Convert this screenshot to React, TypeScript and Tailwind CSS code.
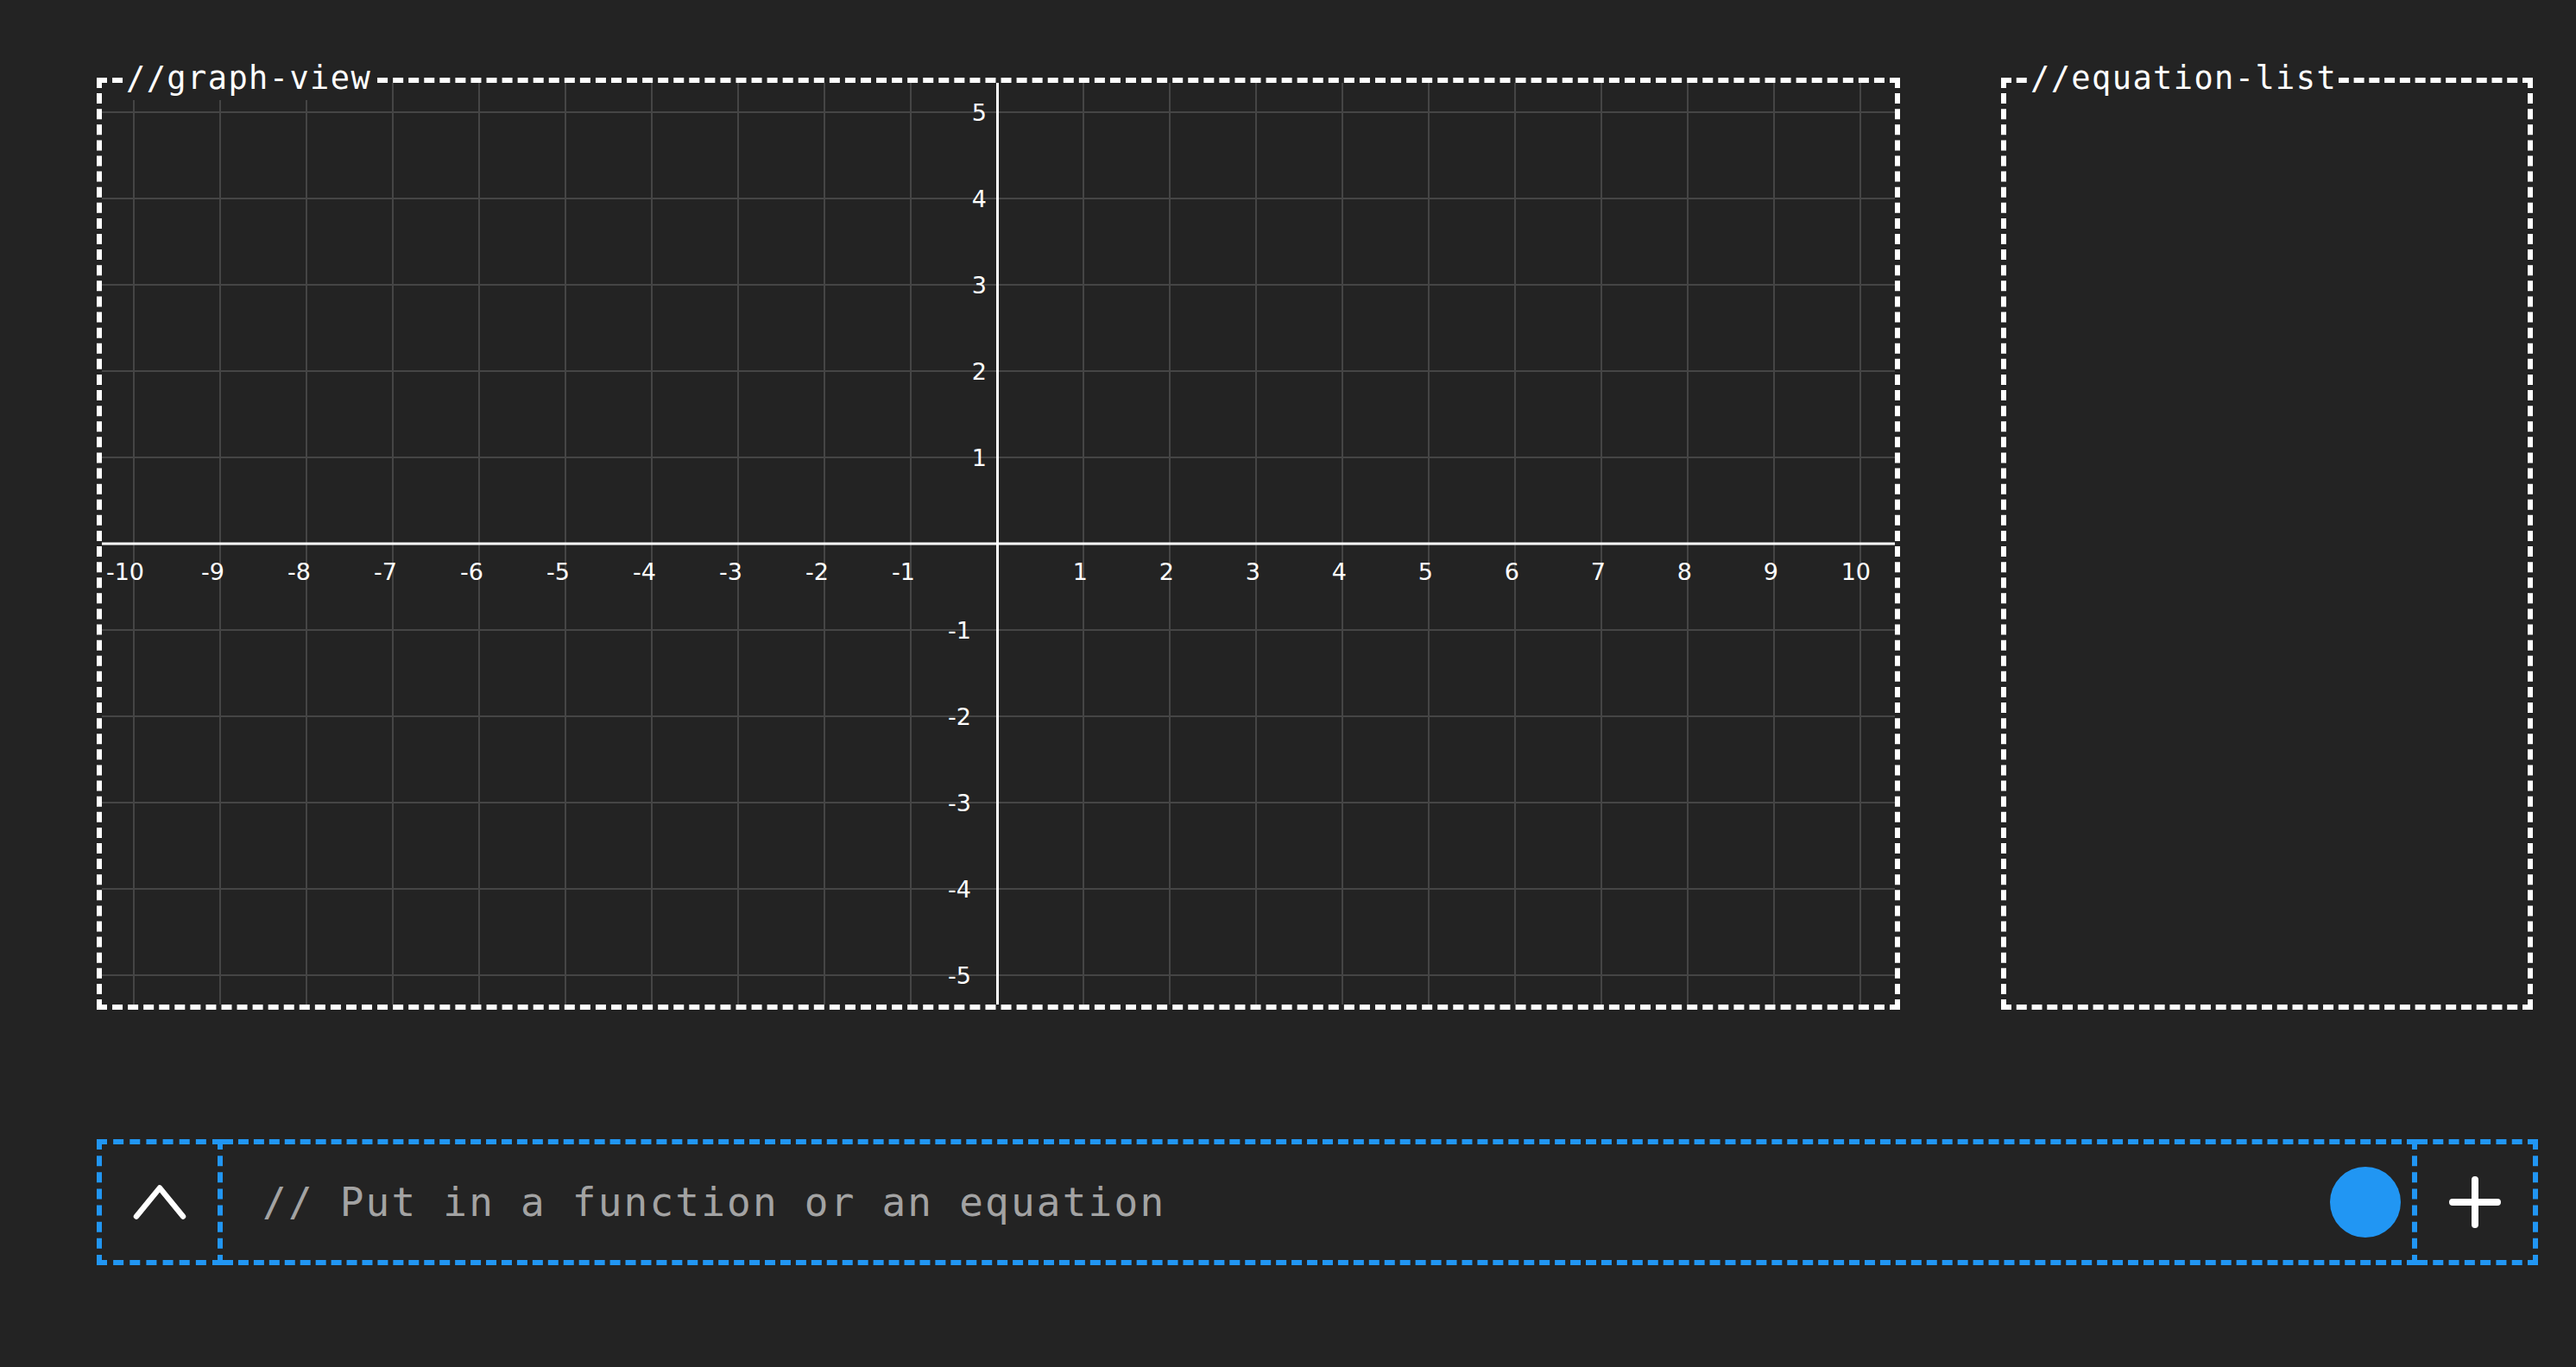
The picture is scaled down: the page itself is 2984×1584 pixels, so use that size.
import React from "react";

const MONO = "font-['DejaVu_Sans_Mono','Liberation_Mono',monospace]";

const OX = 1037;
const OY = 534;
const UNIT = 100;
const W = 2077;
const H = 1068;

const xs = Array.from({ length: 21 }, (_, i) => i - 10);
const ys = Array.from({ length: 11 }, (_, i) => i - 5);

function GraphGrid() {
  return (
    <svg width={W} height={H} viewBox={`0 0 ${W} ${H}`} className="block">
      {xs.map((v) => (
        <line key={`gx${v}`} x1={OX + v * UNIT} y1={0} x2={OX + v * UNIT} y2={H} stroke="#454545" strokeWidth={2} />
      ))}
      {ys.map((v) => (
        <line key={`gy${v}`} x1={0} y1={OY - v * UNIT} x2={W} y2={OY - v * UNIT} stroke="#454545" strokeWidth={2} />
      ))}
      <line x1={0} y1={OY} x2={W} y2={OY} stroke="#ffffff" strokeWidth={3} />
      <line x1={OX + 0.5} y1={0} x2={OX + 0.5} y2={H} stroke="#ffffff" strokeWidth={3} />
      <g fill="#ffffff" fontFamily="'DejaVu Sans', sans-serif" fontSize={27}>
        {xs
          .filter((v) => v !== 0)
          .map((v) => (
            <text key={`lx${v}`} x={OX + v * UNIT + (Math.abs(v) === 10 ? 12 : 5)} y={576} textAnchor="end">
              {v}
            </text>
          ))}
        {ys
          .filter((v) => v !== 0)
          .map((v) => (
            <text key={`ly${v}`} x={v > 0 ? 1025 : 1007} y={OY - v * UNIT + 10} textAnchor="end">
              {v}
            </text>
          ))}
      </g>
    </svg>
  );
}

function PanelLabel({ children }: { children: string }) {
  return (
    <div
      className={`absolute left-[26px] top-[-30px] bg-[#232323] px-[2px] text-[37px] leading-[50px] tracking-[1.4px] text-white ${MONO}`}
    >
      {children}
    </div>
  );
}

export default function App() {
  return (
    <div className="min-h-screen w-full bg-[#232323] pl-[112px] pr-[44px] pt-[90px]">
      <div className="flex gap-[117px]">
        <section className="relative h-[1080px] w-[2089px] border-[6px] border-dashed border-white">
          <GraphGrid />
          <PanelLabel>//graph-view</PanelLabel>
        </section>
        <section className="relative h-[1080px] w-[616px] border-[6px] border-dashed border-white">
          <PanelLabel>//equation-list</PanelLabel>
        </section>
      </div>

      <div className="mt-[150px] flex h-[146px] w-[2828px]">
        <button
          type="button"
          className="flex w-[146px] items-center justify-center border-[6px] border-dashed border-[#2196f3]"
        >
          <svg width={64} height={44} viewBox="0 0 64 44" fill="none">
            <polyline
              points="5,38.5 32,5.5 59,38.5"
              stroke="#ffffff"
              strokeWidth={6.5}
              strokeLinecap="round"
              strokeLinejoin="round"
            />
          </svg>
        </button>
        <div className="flex flex-1 items-center border-y-[6px] border-r-[6px] border-dashed border-[#2196f3] pl-[46px] pr-[13px]">
          <input
            type="text"
            placeholder="// Put in a function or an equation"
            className={`h-full flex-1 bg-transparent text-[46px] tracking-[2.2px] text-white outline-none placeholder:text-[#a3a3a3] ${MONO}`}
          />
          <div className="h-[82px] w-[82px] rounded-full bg-[#2196f3]" />
        </div>
        <button
          type="button"
          className="flex w-[140px] items-center justify-center border-y-[6px] border-r-[6px] border-dashed border-[#2196f3]"
        >
          <svg width={64} height={64} viewBox="0 0 64 64" fill="none">
            <path d="M32 6V58M6 32H58" stroke="#ffffff" strokeWidth={8} strokeLinecap="round" />
          </svg>
        </button>
      </div>
    </div>
  );
}
